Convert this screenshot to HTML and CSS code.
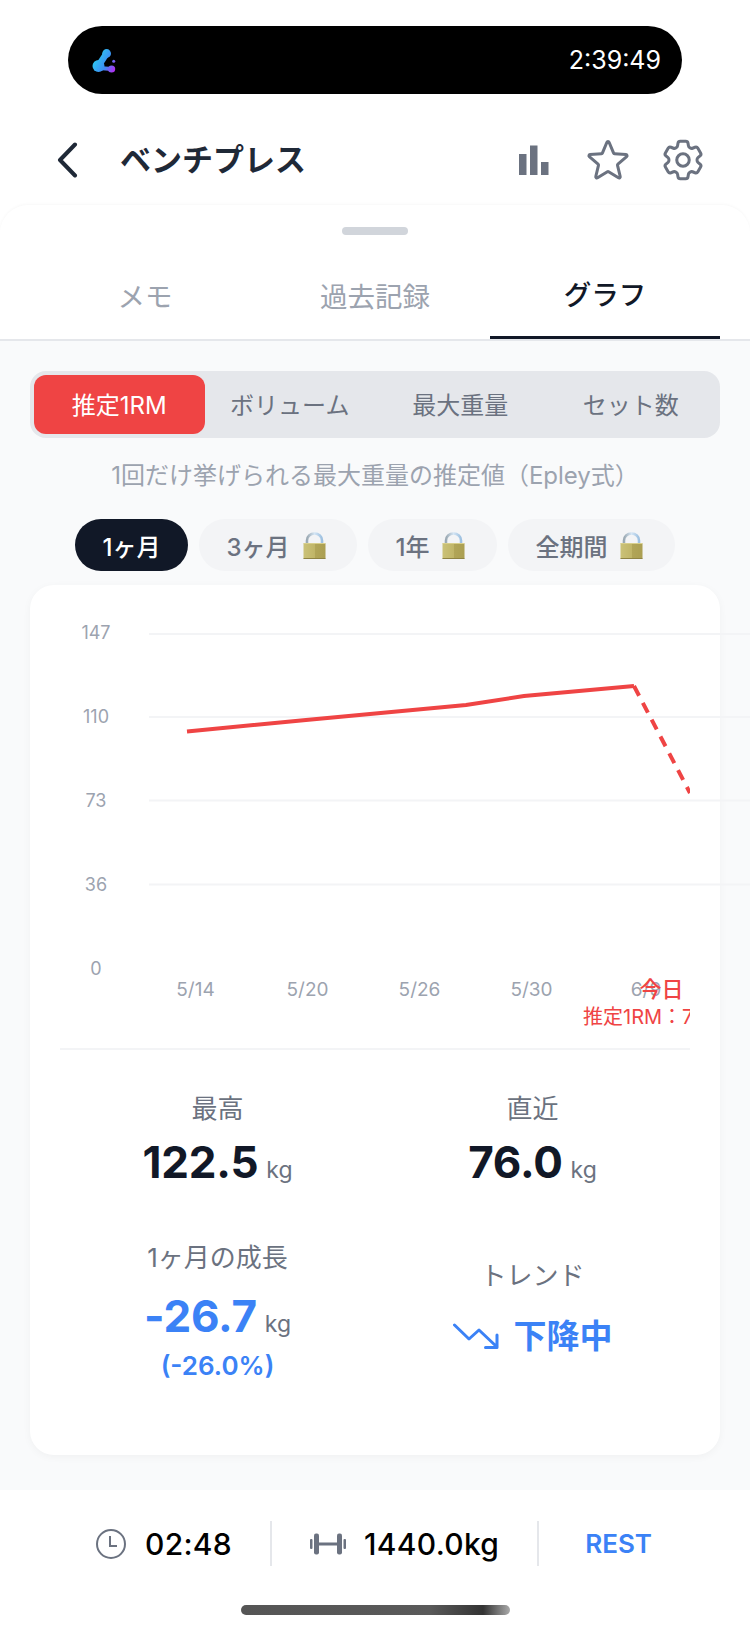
FILE: index.html
```html
<!DOCTYPE html>
<html lang="ja">
<head>
<meta charset="utf-8">
<title>ベンチプレス</title>
<link rel="stylesheet" href="styles.css">
</head>
<body>
<svg class="defs" width="0" height="0" aria-hidden="true">
  <defs>
    <linearGradient id="lockBody" x1="0" y1="0" x2="1" y2="0">
      <stop offset="0" stop-color="#cbc278"/><stop offset=".5" stop-color="#c0b568"/><stop offset=".52" stop-color="#b1a558"/><stop offset="1" stop-color="#ab9f52"/>
    </linearGradient>
    <linearGradient id="lockArc" x1="0" y1="0" x2="1" y2="0">
      <stop offset="0" stop-color="#9aa8b2"/><stop offset=".5" stop-color="#d5e6f5"/><stop offset="1" stop-color="#9dc0e0"/>
    </linearGradient>
    <linearGradient id="logoGrad" gradientUnits="userSpaceOnUse" x1="93" y1="58" x2="114" y2="70">
      <stop offset="0" stop-color="#2ccdf0"/><stop offset=".6" stop-color="#3d8cf5"/><stop offset="1" stop-color="#b22ff0"/>
    </linearGradient>
    <symbol id="lock" viewBox="0 0 23 27">
      <path d="M4 12V8.5a7.5 7 0 0 1 15 0V12" fill="none" stroke="url(#lockArc)" stroke-width="2.6"/>
      <rect x="0.5" y="11" width="22" height="16" rx="1" fill="url(#lockBody)"/>
      <rect x="0.5" y="11" width="22" height="1" fill="#d8cf8c"/>
      <rect x="0.5" y="26" width="22" height="1" fill="#8f8444"/>
    </symbol>
  </defs>
</svg>

<div class="island">
  <svg class="logo" viewBox="92 48 24 24" width="24" height="24">
    <circle cx="98.5" cy="65" r="6" fill="url(#logoGrad)"/>
    <circle cx="106.6" cy="52.5" r="4.4" fill="url(#logoGrad)"/>
    <path d="M99 64 106.5 52.5" fill="none" stroke="url(#logoGrad)" stroke-width="6.5"/>
    <path d="M99 67 111.5 68" fill="none" stroke="url(#logoGrad)" stroke-width="4"/>
    <circle cx="111.6" cy="68" r="3.6" fill="url(#logoGrad)"/>
    <circle cx="113.7" cy="60.3" r="1.5" fill="url(#logoGrad)"/>
  </svg>
  <span class="clock-time">2:39:49</span>
</div>

<header class="header">
  <svg class="back" viewBox="0 0 22 36" width="22" height="36"><path d="M19 2.5 4 18l15 15.5" fill="none" stroke="#1f2937" stroke-width="4" stroke-linecap="round" stroke-linejoin="round"/></svg>
  <h1 class="title">ベンチプレス</h1>
  <div class="header-icons">
    <svg class="hicon" viewBox="0 0 50 50" width="50" height="50"><g fill="#6b7280"><rect x="11" y="19" width="7.5" height="21"/><rect x="22" y="10.5" width="7.5" height="29.5"/><rect x="33" y="27" width="7.5" height="13"/></g></svg>
    <svg class="hicon" viewBox="0 0 24 24" width="50" height="50"><path d="M11.48 3.499a.562.562 0 0 1 1.04 0l2.125 5.111a.563.563 0 0 0 .475.345l5.518.442c.499.04.701.663.321.988l-4.204 3.602a.563.563 0 0 0-.182.557l1.285 5.385a.562.562 0 0 1-.84.61l-4.725-2.885a.562.562 0 0 0-.586 0L6.982 20.54a.562.562 0 0 1-.84-.61l1.285-5.386a.562.562 0 0 0-.182-.557l-4.204-3.602a.562.562 0 0 1 .321-.988l5.518-.442a.563.563 0 0 0 .475-.345L11.48 3.5Z" fill="none" stroke="#6b7280" stroke-width="1.45" stroke-linejoin="round"/></svg>
    <svg class="hicon" viewBox="0 0 24 24" width="50" height="50"><g fill="none" stroke="#6b7280" stroke-width="1.45" stroke-linejoin="round"><path d="M9.594 3.94c.09-.542.56-.94 1.11-.94h2.593c.55 0 1.02.398 1.11.94l.213 1.281c.063.374.313.686.645.87.074.04.147.083.22.127.325.196.72.257 1.075.124l1.217-.456a1.125 1.125 0 0 1 1.37.49l1.296 2.247a1.125 1.125 0 0 1-.26 1.431l-1.003.827c-.293.241-.438.613-.43.992a7.723 7.723 0 0 1 0 .255c-.008.378.137.75.43.991l1.004.827c.424.35.534.955.26 1.43l-1.298 2.247a1.125 1.125 0 0 1-1.369.491l-1.217-.456c-.355-.133-.75-.072-1.076.124a6.47 6.47 0 0 1-.22.128c-.331.183-.581.495-.644.869l-.213 1.281c-.09.543-.56.94-1.11.94h-2.594c-.55 0-1.019-.398-1.11-.94l-.213-1.281c-.062-.374-.312-.686-.644-.87a6.52 6.52 0 0 1-.22-.127c-.325-.196-.72-.257-1.076-.124l-1.217.456a1.125 1.125 0 0 1-1.369-.49l-1.297-2.247a1.125 1.125 0 0 1 .26-1.431l1.004-.827c.292-.24.437-.613.43-.991a6.932 6.932 0 0 1 0-.255c.007-.38-.138-.751-.43-.992l-1.004-.827a1.125 1.125 0 0 1-.26-1.43l1.297-2.247a1.125 1.125 0 0 1 1.37-.491l1.216.456c.356.133.751.072 1.076-.124.072-.044.146-.086.22-.128.332-.183.582-.495.644-.869l.214-1.28Z"/><path d="M15 12a3 3 0 1 1-6 0 3 3 0 0 1 6 0Z"/></g></svg>
  </div>
</header>

<main class="sheet">
  <div class="handle"></div>
  <nav class="tabs">
    <div class="tab">メモ</div>
    <div class="tab">過去記録</div>
    <div class="tab tab-active">グラフ</div>
  </nav>

  <section class="content">
    <div class="segments">
      <div class="segment segment-active">推定1RM</div>
      <div class="segment">ボリューム</div>
      <div class="segment">最大重量</div>
      <div class="segment">セット数</div>
    </div>
    <p class="desc">1回だけ挙げられる最大重量の推定値（Epley式）</p>
    <div class="ranges">
      <div class="range range-active">1ヶ月</div>
      <div class="range">3ヶ月<svg class="lock" width="23" height="27"><use href="#lock"/></svg></div>
      <div class="range">1年<svg class="lock" width="23" height="27"><use href="#lock"/></svg></div>
      <div class="range">全期間<svg class="lock" width="23" height="27"><use href="#lock"/></svg></div>
    </div>

    <div class="card">
      <svg class="chart" viewBox="60 585 690 463" width="690" height="463">
        <defs><clipPath id="plotClip"><rect x="60" y="585" width="630" height="463"/></clipPath></defs>
        <g class="grid">
          <line x1="149" y1="634" x2="750" y2="634"/>
          <line x1="149" y1="717" x2="750" y2="717"/>
          <line x1="149" y1="800.5" x2="750" y2="800.5"/>
          <line x1="149" y1="884.5" x2="750" y2="884.5"/>
        </g>
        <g class="ylabels">
          <text x="96" y="639">147</text>
          <text x="96" y="723">110</text>
          <text x="96" y="807">73</text>
          <text x="96" y="891">36</text>
          <text x="96" y="975">0</text>
        </g>
        <g class="xlabels">
          <text x="195.5" y="996">5/14</text>
          <text x="307.5" y="996">5/20</text>
          <text x="419.5" y="996">5/26</text>
          <text x="531.5" y="996">5/30</text>
          <text x="646" y="996">6/9</text>
        </g>
        <g clip-path="url(#plotClip)">
          <polyline class="line" points="187,731.5 306,720 466,705 524,696 634,686"/>
          <line class="line dash" x1="634" y1="686" x2="690" y2="793"/>
          <text class="today" x="661.5" y="997">今日</text>
          <text class="today-val" x="583" y="1024">推定1RM：76.0kg</text>
        </g>
      </svg>

      <div class="stats">
        <div class="stat">
          <div class="stat-label">最高</div>
          <div class="stat-value"><b class="num">122.5</b><span class="unit">kg</span></div>
        </div>
        <div class="stat">
          <div class="stat-label">直近</div>
          <div class="stat-value"><b class="num">76.0</b><span class="unit">kg</span></div>
        </div>
        <div class="stat stat-growth">
          <div class="stat-label">1ヶ月の成長</div>
          <div class="stat-value"><b class="num num-blue">-26.7</b><span class="unit">kg</span></div>
          <div class="stat-pct">(-26.0%)</div>
        </div>
        <div class="stat stat-trend">
          <div class="stat-label">トレンド</div>
          <div class="trend">
            <svg class="trend-icon" viewBox="0 0 46 26" width="46" height="26"><path d="M1.5 2 16 16l10-9 18 17M32.5 24.5H44V12" fill="none" stroke="#3b82f6" stroke-width="3" stroke-linecap="round" stroke-linejoin="round"/></svg>
            <span>下降中</span>
          </div>
        </div>
      </div>
    </div>
  </section>
</main>

<footer class="bar">
  <div class="bar-item">
    <svg viewBox="0 0 32 32" width="32" height="32"><circle cx="16" cy="16" r="14" fill="none" stroke="#6b7280" stroke-width="2"/><path d="M15 8v10h7" fill="none" stroke="#6b7280" stroke-width="2"/></svg>
    <span class="bar-text">02:48</span>
  </div>
  <div class="bar-sep"></div>
  <div class="bar-item">
    <svg viewBox="0 0 36 22" width="36" height="22"><g fill="#6b7280"><rect x="0" y="6" width="2.5" height="10" rx="1"/><rect x="4" y="0.5" width="5" height="21" rx="2"/><rect x="9" y="9.5" width="18" height="3"/><rect x="27" y="0.5" width="5" height="21" rx="2"/><rect x="33.5" y="6" width="2.5" height="10" rx="1"/></g></svg>
    <span class="bar-text">1440.0kg</span>
  </div>
  <div class="bar-sep"></div>
  <div class="rest">REST</div>
</footer>
<div class="home"></div>
</body>
</html>
```
FILE: styles.css
```css
* { box-sizing: border-box; }
html, body { margin: 0; padding: 0; }
body {
  width: 750px;
  height: 1630px;
  overflow: hidden;
  background: #fff;
  font-family: Inter, "Noto Sans CJK JP", sans-serif;
  color: #111827;
}
.defs { position: absolute; }

.island {
  margin: 26px 68px 0;
  height: 68px;
  background: #000;
  border-radius: 34px;
  display: flex;
  align-items: center;
  justify-content: space-between;
  padding: 0 21px 0 24px;
}
.clock-time { color: #fff; font-size: 25px; line-height: 1; }
.logo { display: block; margin-top: 2px; }

.header {
  height: 50px;
  margin: 41px 0 20px;
  padding: 0 42px 0 56px;
  display: flex;
  align-items: center;
}
.back { flex: none; }
.title {
  margin: 0 0 0 42px;
  flex: 1;
  font-size: 31px;
  font-weight: 700;
  line-height: 50px;
  color: #1f2937;
}
.header-icons { display: flex; gap: 25px; }
.hicon { display: block; }

.sheet {
  height: 1285px;
  background: #fff;
  border-radius: 28px 28px 0 0;
  box-shadow: 0 -1px 3px rgba(0,0,0,.03);
  display: flex;
  flex-direction: column;
  padding-top: 22px;
}
.handle {
  width: 66px;
  height: 8px;
  margin: 0 auto;
  border-radius: 4px;
  background: #d1d5db;
}
.tabs {
  margin-top: 42px;
  padding: 0 30px;
  display: grid;
  grid-template-columns: repeat(3, 1fr);
  border-bottom: 2px solid #e5e7eb;
}
.tab {
  height: 62px;
  line-height: 40px;
  text-align: center;
  font-size: 27.5px;
  color: #9ca3af;
}
.tab-active {
  color: #111827;
  font-weight: 500;
  border-bottom: 3px solid #111827;
  line-height: 37px;
}

.content {
  flex: 1;
  background: #f9fafb;
  padding: 30px 30px 35px;
  display: flex;
  flex-direction: column;
}
.segments {
  height: 67px;
  padding: 4px;
  background: #e5e7eb;
  border-radius: 16px;
  display: grid;
  grid-template-columns: repeat(4, 1fr);
}
.segment {
  display: flex;
  align-items: center;
  justify-content: center;
  padding-bottom: 2px;
  font-size: 24px;
  font-weight: 400;
  color: #6b7280;
  border-radius: 12px;
}
.segment-active { background: #ef4444; color: #fff; }
.desc {
  margin: 20px 0 0;
  line-height: 36px;
  text-align: center;
  font-size: 24px;
  color: #9ca3af;
}
.ranges {
  margin-top: 25px;
  display: flex;
  justify-content: center;
  gap: 11px;
}
.range {
  height: 52px;
  padding: 0 27.5px;
  display: flex;
  align-items: center;
  border-radius: 26px;
  background: #f3f4f6;
  color: #6b7280;
  font-size: 24px;
  font-weight: 500;
}
.range-active { background: #111827; color: #fff; }
.lock { margin: 0 4px 0 13px; flex: none; }

.card {
  margin-top: 14px;
  flex: 1;
  padding: 0 30px;
  background: #fff;
  border-radius: 24px;
  box-shadow: 0 2px 8px rgba(0,0,0,.04);
  display: flex;
  flex-direction: column;
}
.chart { display: block; flex: none; overflow: visible; }
.grid line { stroke: #f3f4f6; stroke-width: 2; }
.ylabels text { font-size: 18px; fill: #9ca3af; text-anchor: middle; }
.xlabels text { font-size: 19px; fill: #9ca3af; text-anchor: middle; }
.line { fill: none; stroke: #ef4444; stroke-width: 4; }
.dash { stroke-dasharray: 11 8; }
.today { font-size: 22px; font-weight: 500; fill: #ef4444; text-anchor: middle; }
.today-val { font-size: 20px; font-weight: 400; fill: #ef4444; }

.stats {
  border-top: 2px solid #f3f4f6;
  padding-top: 41px;
  display: grid;
  grid-template-columns: 1fr 1fr;
  row-gap: 42px;
  align-items: center;
}
.stat { text-align: center; }
.stat-label { font-size: 26px; line-height: 36px; color: #6b7280; }
.stat-value {
  margin-top: 7px;
  display: flex;
  align-items: baseline;
  justify-content: center;
  gap: 8px;
  line-height: 56px;
}
.stat-growth .stat-value { margin-top: 12px; }
.stat-trend { margin-bottom: 7px; }
.num { font-size: 44px; font-weight: 700; letter-spacing: -.2px; color: #111827; }
.num-blue { color: #3b82f6; }
.unit { font-size: 23px; color: #6b7280; }
.stat-pct { margin-top: -4px; font-size: 26px; font-weight: 600; line-height: 36px; color: #3b82f6; }
.trend {
  margin-top: 19px;
  display: flex;
  align-items: center;
  justify-content: center;
  gap: 15px;
  font-size: 33px;
  font-weight: 700;
  line-height: 46px;
  color: #3b82f6;
}
.trend-icon { flex: none; }

.bar {
  height: 103px;
  padding: 31px 3px 0 0;
  display: flex;
  justify-content: center;
  gap: 38px;
  background: #fff;
}
.bar-item { height: 45px; display: flex; align-items: center; gap: 18px; }
.bar-text { font-size: 30px; font-weight: 500; letter-spacing: .3px; color: #000; }
.bar-sep { width: 2px; height: 45px; background: #e5e7eb; }
.rest {
  height: 45px;
  line-height: 45px;
  padding: 0 0 0 8px;
  font-size: 26px;
  font-weight: 600;
  color: #3b82f6;
}
.home {
  width: 269px;
  height: 10px;
  margin: 12px 0 0 241px;
  border-radius: 5px;
  background: linear-gradient(90deg, #555 0%, #5a5a5a 70%, #333 90%, #aaa 100%);
}
```
